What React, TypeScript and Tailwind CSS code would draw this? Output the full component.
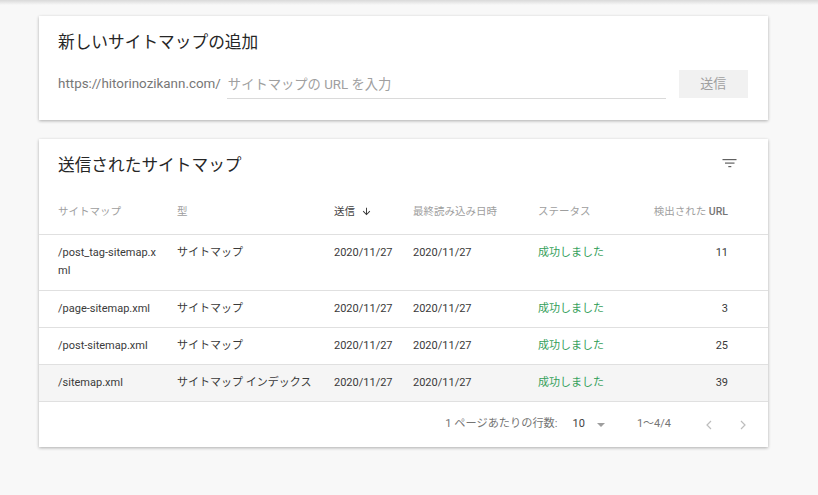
import React from "react";

const font = { fontFamily: '"Roboto", "Noto Sans CJK JP", sans-serif' };

const rows = [
  { path: ["/post_tag-sitemap.x", "ml"], type: "サイトマップ", sent: "2020/11/27", read: "2020/11/27", status: "成功しました", urls: "11", hover: false },
  { path: ["/page-sitemap.xml"], type: "サイトマップ", sent: "2020/11/27", read: "2020/11/27", status: "成功しました", urls: "3", hover: false },
  { path: ["/post-sitemap.xml"], type: "サイトマップ", sent: "2020/11/27", read: "2020/11/27", status: "成功しました", urls: "25", hover: false },
  { path: ["/sitemap.xml"], type: "サイトマップ インデックス", sent: "2020/11/27", read: "2020/11/27", status: "成功しました", urls: "39", hover: true },
];

const grid = "grid grid-cols-[119px_157px_79px_125px_1fr_120px] pl-[19px] pr-[40px]";

function FilterIcon() {
  return (
    <svg width="16" height="10" viewBox="0 0 16 10" className="block">
      <rect x="0.5" y="0" width="14" height="1.2" fill="#616161" />
      <rect x="3" y="3.5" width="9.5" height="1.2" fill="#616161" />
      <rect x="6.3" y="7" width="3" height="1.2" fill="#616161" />
    </svg>
  );
}

function ArrowDown() {
  return (
    <svg width="11" height="11" viewBox="0 0 24 24" className="block">
      <path d="M20 12l-1.41-1.41L13 16.17V4h-2v12.17l-5.58-5.59L4 12l8 8 8-8z" fill="#333333" />
    </svg>
  );
}

export default function App() {
  return (
    <div className="min-h-[495px] w-[818px] bg-[#f8f8f8]" style={font}>
      <div className="h-[5px] bg-gradient-to-b from-[#d9d9d9] to-[#f8f8f8]" />
      <div className="pl-[39px] pr-[50px] pt-[11px] flex flex-col gap-[19px]">
        {/* Card 1 */}
        <div className="bg-white shadow-[0_1px_3px_rgba(0,0,0,0.3)] pt-[16px] pb-[22px] px-[19px]">
          <div className="h-[22px] leading-[22px] text-[16.7px] text-[#262626]">新しいサイトマップの追加</div>
          <div className="mt-[16px] h-[28px] flex items-center">
            <span className="text-[13.4px] text-[#777777] leading-[20px]">https://hitorinozikann.com/</span>
            <div className="ml-[6px] w-[439px] h-[28px] flex items-center border-b border-[#dadada] mt-[2px]">
              <span className="text-[13.3px] text-[#a0a0a0] leading-[20px] pl-[1px]">サイトマップの URL を入力</span>
            </div>
            <div className="ml-[13px] w-[69px] h-[28px] bg-[#f1f1f1] flex items-center justify-center text-[13px] text-[#a0a0a0]">
              送信
            </div>
          </div>
        </div>

        {/* Card 2 */}
        <div className="bg-white shadow-[0_1px_3px_rgba(0,0,0,0.3)]">
          <div className="pt-[16px] pb-[12px] pl-[19px] pr-[30px] flex items-center justify-between">
            <div className="h-[22px] leading-[22px] text-[16.7px] text-[#262626]">送信されたサイトマップ</div>
            <div className="-mt-[5px]"><FilterIcon /></div>
          </div>
          <div className={`${grid} h-[45px] items-center text-[10.5px] text-[#9e9e9e]`}>
            <div>サイトマップ</div>
            <div>型</div>
            <div className="flex items-center gap-[6px] text-[#424242]">送信<ArrowDown /></div>
            <div>最終読み込み日時</div>
            <div>ステータス</div>
            <div className="text-right">検出された <span className="font-medium text-[#757575]">URL</span></div>
          </div>
          {rows.map((r, i) => (
            <div
              key={i}
              className={`${grid} border-t border-[#e0e0e0] pt-[9px] ${i === 0 ? "pb-[10px]" : "pb-[9px]"} text-[11px] leading-[18px] text-[#3a3a3a] ${r.hover ? "bg-[#f5f5f5]" : ""}`}
            >
              <div>
                {r.path.map((p, j) => (
                  <div key={j}>{p}</div>
                ))}
              </div>
              <div>{r.type}</div>
              <div>{r.sent}</div>
              <div>{r.read}</div>
              <div className="text-[#34a05a]">{r.status}</div>
              <div className="text-right">{r.urls}</div>
            </div>
          ))}
          <div className="border-t border-[#e0e0e0] h-[46px] flex items-center justify-end pr-[22px] text-[11px] text-[#757575]">
            <span className="text-[11.2px]">1 ページあたりの行数:</span>
            <span className="ml-[15px] text-[#424242]">10</span>
            <svg width="8" height="4" viewBox="0 0 8 4" className="ml-[12px]">
              <path d="M0 0h8L4 4z" fill="#9e9e9e" />
            </svg>
            <span className="ml-[32px]">1～4/4</span>
            <svg width="6" height="10" viewBox="0 0 6 10" className="ml-[35px]">
              <path d="M5 1L1 5l4 4" stroke="#bdbdbd" strokeWidth="1.2" fill="none" />
            </svg>
            <svg width="6" height="10" viewBox="0 0 6 10" className="ml-[28px]">
              <path d="M1 1l4 4-4 4" stroke="#bdbdbd" strokeWidth="1.2" fill="none" />
            </svg>
          </div>
        </div>
      </div>
    </div>
  );
}
